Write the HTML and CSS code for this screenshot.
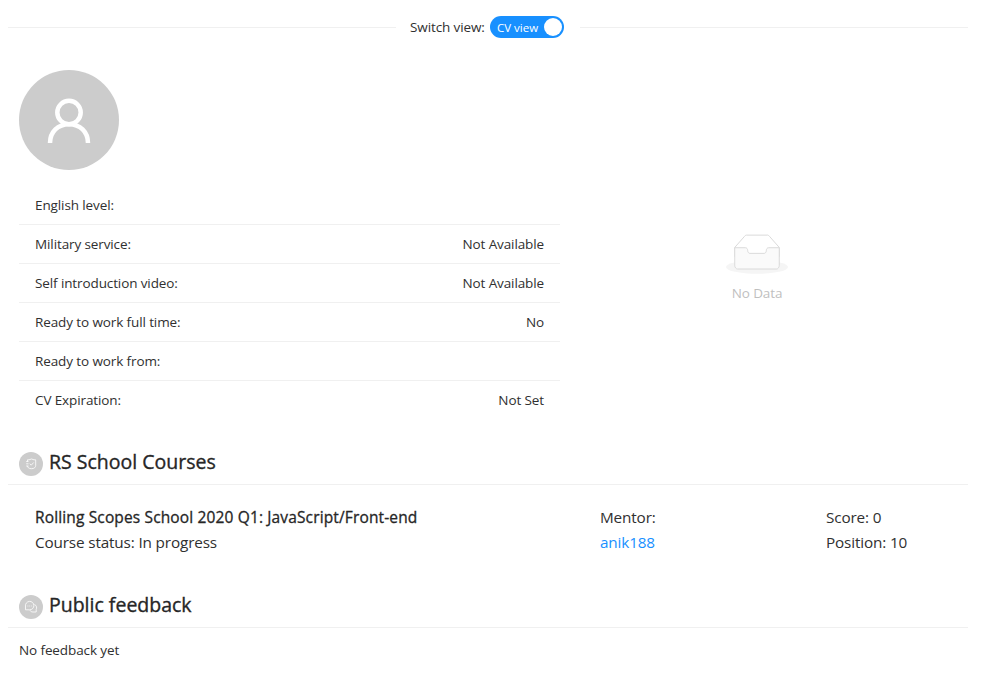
FILE: index.html
```html
<!DOCTYPE html>
<html lang="en">
<head>
<meta charset="utf-8">
<title>CV view</title>
<link rel="stylesheet" href="styles.css">
</head>
<body>
<div class="divider">
  <span class="divider-text">Switch view:</span>
  <button class="switch" type="button"><span>CV view</span><i></i></button>
</div>
<main>
  <section class="top">
    <div class="info">
      <div class="avatar">
        <svg viewBox="0 0 100 100" width="100" height="100" fill="none" stroke="#fff" stroke-width="4.5"><circle cx="50" cy="42.500" r="11.7"/><path d="M31 73c0-11 8-18.800 19-18.800S69 62 69 73"/></svg>
      </div>
      <ul class="list">
        <li><span>English level:</span></li>
        <li><span>Military service:</span><span>Not Available</span></li>
        <li><span>Self introduction video:</span><span>Not Available</span></li>
        <li><span>Ready to work full time:</span><span>No</span></li>
        <li><span>Ready to work from:</span></li>
        <li><span>CV Expiration:</span><span>Not Set</span></li>
      </ul>
    </div>
    <div class="empty">
      <svg width="62" height="40" viewBox="0 0 64 41"><g transform="translate(0 1)" fill="none" fill-rule="evenodd"><ellipse fill="#F5F5F5" cx="32" cy="33" rx="32" ry="7"/><g fill-rule="nonzero" stroke="#D9D9D9"><path d="M55 12.760L44.854 1.258C44.367.474 43.656 0 42.907 0H21.093c-.749 0-1.460.474-1.947 1.257L9 12.761V22h46v-9.240z"/><path d="M41.613 15.931c0-1.605.994-2.930 2.227-2.931H55v18.137C55 33.260 53.680 35 52.050 35h-40.100C10.320 35 9 33.259 9 31.137V13h11.160c1.233 0 2.227 1.323 2.227 2.928v.022c0 1.605 1.005 2.901 2.237 2.901h14.752c1.232 0 2.237-1.308 2.237-2.913v-.007z" fill="#FAFAFA"/></g></g></svg>
      <p>No Data</p>
    </div>
  </section>
  <section class="block">
    <h2><span class="mini"><svg viewBox="0 0 14 14" width="14" height="14" fill="none" stroke="#fff" stroke-width=".8"><path d="M3.500 4.500V2.800h1.500L7.500 2l2.500.8h1.700v5.700c0 1.500-1.200 3.200-4.200 3.200s-4-1.500-4-2.700M2.200 4.500h2.300M2.200 6.800h2.300M2.200 9h2.300"/><path d="M5.800 6.700 7.200 8.200l2.500-2.700"/></svg></span><span>RS School Courses</span></h2>
    <div class="course">
      <div><strong>Rolling Scopes School 2020 Q1: JavaScript/Front-end</strong><br><span>Course status: In progress</span></div>
      <div><span>Mentor:</span><br><a>anik188</a></div>
      <div><span>Score: 0</span><br><span>Position: 10</span></div>
    </div>
  </section>
  <section class="block feedback">
    <h2><span class="mini"><svg viewBox="0 0 14 14" width="14" height="14" fill="none" stroke="#fff" stroke-width=".8"><path d="M1.500 9.800V6a4.200 4.200 0 1 1 4.200 3.800z"/><path d="M10.500 4.500c2.300 1 2.500 3.500 1.700 5v2.500H9c-1.500 0-2.500-.6-3-1.600M3.500 6h.8M5.400 6h.8M7.300 6h.8"/></svg></span><span>Public feedback</span></h2>
    <p>No feedback yet</p>
  </section>
</main>
</body>
</html>
```
FILE: styles.css
```css
* { box-sizing: border-box; }
body { margin: 0; background: #fff; color: #303030; font: 13.5px/22px "Open Sans", "Noto Sans", sans-serif; letter-spacing: -.11px; }
.divider { display: flex; align-items: center; height: 22px; margin: 16px 16px 0 8px; }
.divider::before, .divider::after { content: ""; height: 1px; background: #f0f0f0; }
.divider::before { width: 388px; margin-right: 14px; }
.divider::after { flex: 1; margin-left: 16px; }
.divider-text { width: 80px; white-space: nowrap; }
.switch { display: flex; align-items: center; justify-content: space-between; width: 74px; height: 22px; padding: 1px 2px 0 7px; border: 0; border-radius: 11px; background: #1890ff; color: #fff; font: 11.5px/21px "Open Sans", sans-serif; white-space: nowrap; }
.switch i { width: 18px; height: 18px; margin-top: -1px; border-radius: 50%; background: #fff; }
main { width: 960px; margin: 32px 0 0 8px; }
.top { display: flex; height: 350px; padding-left: 11px; }
.info { width: 541px; }
.avatar { width: 100px; height: 100px; border-radius: 50%; background: #ccc; }
.avatar svg { display: block; }
.list { list-style: none; margin: 16px 0 0; padding: 0; }
.list li { display: flex; justify-content: space-between; height: 39px; padding: 8px 16px; border-bottom: 1px solid #f0f0f0; }
.list li:last-child { border: 0; }
.empty { flex: 1; padding: 164px 14px 0 0; text-align: center; color: #bfbfbf; }
.empty svg { display: block; margin: 0 auto; }
.empty p { margin: 8px 0 0; }
h2 { display: flex; align-items: center; gap: 6px; height: 45px; margin: 0; padding: 0 0 0 11px; border-bottom: 1px solid #f0f0f0; color: #262626; font-size: 19.5px; line-height: 28px; font-weight: 400; letter-spacing: 0; -webkit-text-stroke: .35px #262626; }
.mini { display: grid; place-items: center; width: 24px; height: 24px; margin-top: 3px; border-radius: 50%; background: #ccc; }
.block { padding-top: 20px; }
.course { display: grid; grid-template-columns: 565px 226px 1fr; padding: 20px 0 0 27px; font-size: 15.3px; line-height: 25px; height: 78px; letter-spacing: -.15px; }
.course strong { color: #262626; font-size: 15.5px; font-weight: 400; letter-spacing: .14px; -webkit-text-stroke: .3px #262626; }
.course a { color: #1890ff; }
.feedback p { margin: 11px 0 0 11px; }
```
